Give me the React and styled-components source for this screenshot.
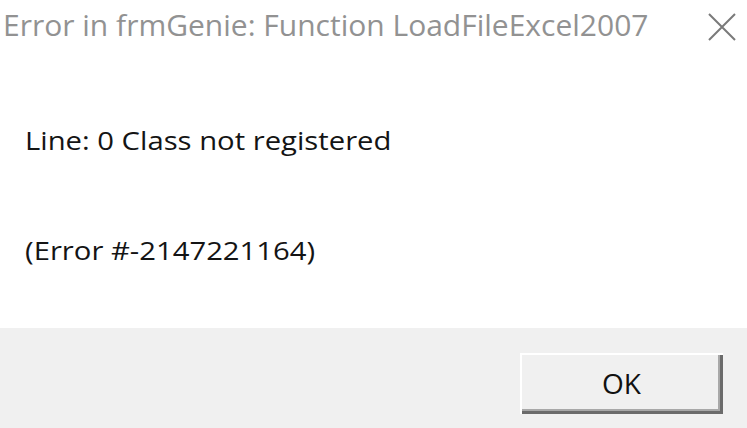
import React from "react";
import styled, { createGlobalStyle } from "styled-components";

const Global = createGlobalStyle`
  html, body { margin: 0; padding: 0; background: #ffffff; }
  body { font-family: "Open Sans", "Noto Sans", sans-serif; }
`;

const Dialog = styled.div`
  width: 747px;
  height: 428px;
  display: flex;
  flex-direction: column;
  background: #ffffff;
  overflow: hidden;
`;

const TitleBar = styled.div`
  height: 56px;
  box-sizing: border-box;
  display: flex;
  align-items: flex-start;
  justify-content: space-between;
  padding: 5px 10px 0 3px;
`;

const Title = styled.span`
  font-size: 30px;
  line-height: 40px;
  color: #929292;
  white-space: nowrap;
`;

const Close = styled.svg`
  width: 30px;
  height: 28px;
  margin-top: 8px;
  flex: none;
`;

const Body = styled.div`
  flex: 1;
  display: flex;
  flex-direction: column;
  align-items: flex-start;
  padding: 69px 0 0 25px;
  gap: 80px;
`;

const Message = styled.div`
  font-size: 25px;
  line-height: 30px;
  color: #141414;
  white-space: nowrap;
  transform: scaleX(1.17);
  transform-origin: left center;
`;

const Footer = styled.div`
  height: 100px;
  background: #f0f0f0;
  display: flex;
  justify-content: flex-end;
  align-items: flex-start;
  padding: 25px 24px 0 0;
  box-sizing: border-box;
`;

const Button = styled.button`
  width: 203px;
  height: 61px;
  box-sizing: border-box;
  background: #f0f0f0;
  font-family: "Open Sans", "Noto Sans", sans-serif;
  font-size: 28px;
  line-height: 1;
  color: #111111;
  border: none;
  padding: 0 0 2px 0;
  box-shadow:
    inset 2px 2px 0 #ffffff,
    inset -3px -3px 0 #6b6b6b,
    inset -5px -5px 0 #a8a8a8;
`;

export default function App() {
  return (
    <>
      <Global />
      <Dialog>
        <TitleBar>
          <Title>Error in frmGenie: Function LoadFileExcel2007</Title>
          <Close viewBox="0 0 30 28">
            <path d="M2 1 L28 27 M28 1 L2 27" stroke="#7a7a7a" strokeWidth="2" fill="none" />
          </Close>
        </TitleBar>
        <Body>
          <Message>Line: 0 Class not registered</Message>
          <Message>(Error #-2147221164)</Message>
        </Body>
        <Footer>
          <Button>OK</Button>
        </Footer>
      </Dialog>
    </>
  );
}
